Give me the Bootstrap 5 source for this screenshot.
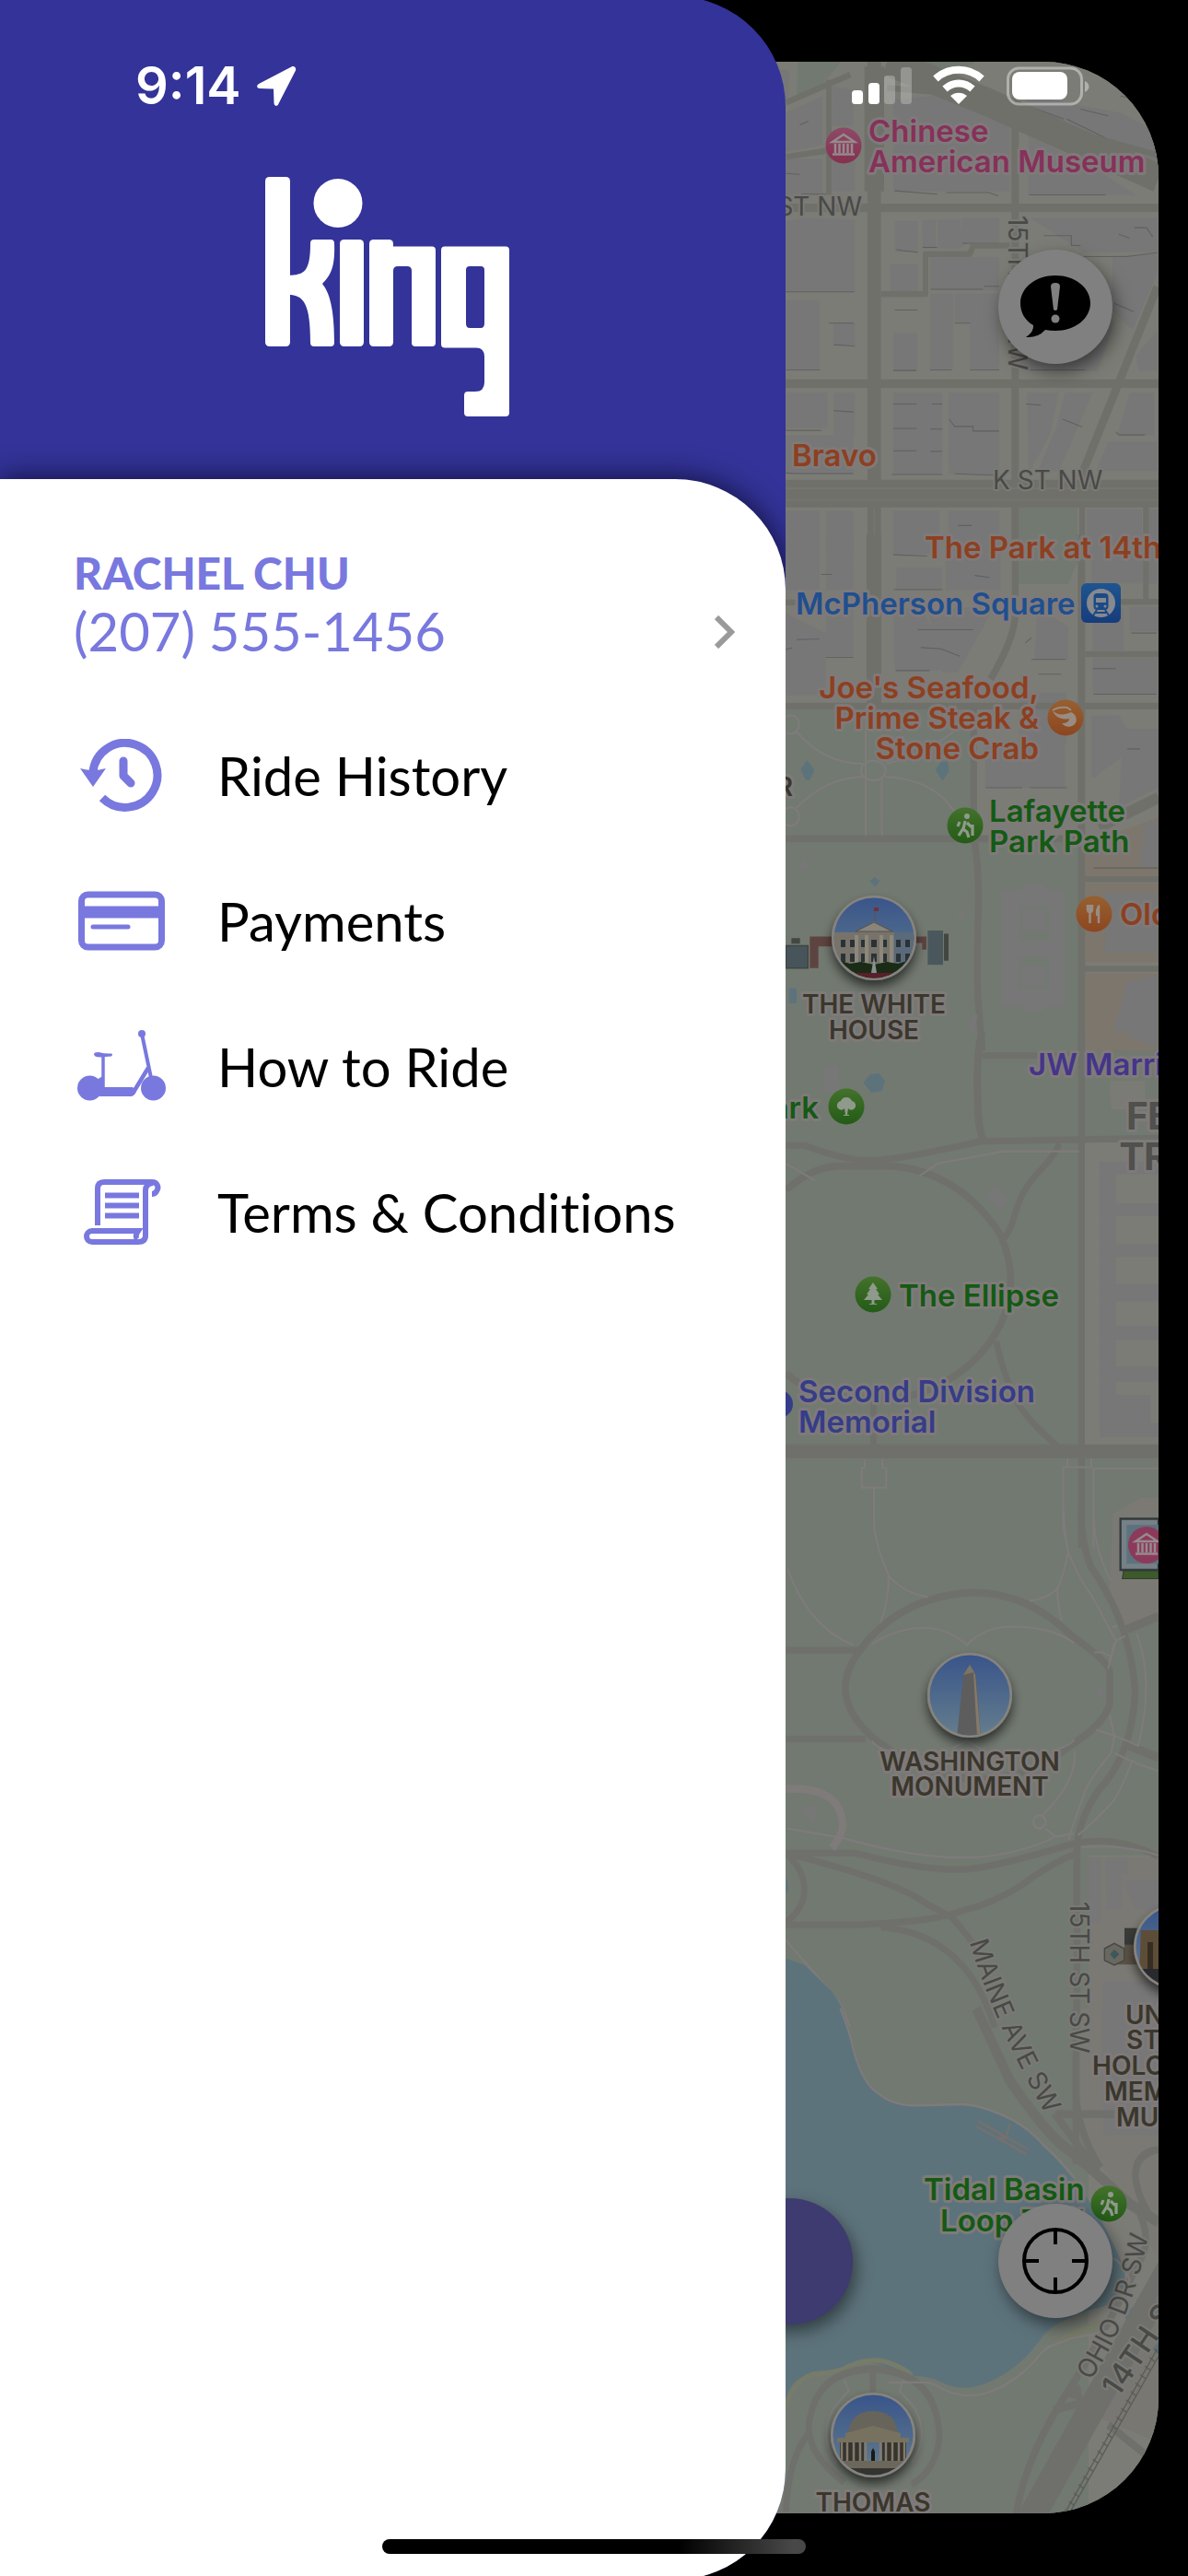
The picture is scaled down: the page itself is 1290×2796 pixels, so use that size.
<!DOCTYPE html>
<html lang="en">
<head>
<meta charset="utf-8">
<meta name="viewport" content="width=device-width, initial-scale=1">
<title>king – menu</title>
<link href="https://cdn.jsdelivr.net/npm/bootstrap@5.3.0/dist/css/bootstrap.min.css" rel="stylesheet">
<style>
  body { background: #000; font-family: Lato, "Open Sans", sans-serif; font-variant-ligatures: none; }
  .app-shell { min-height: 100vh; overflow: hidden; }
  .status-strip { z-index: 5; padding: 60px 107px 0 147px; color: #fff; }
  .clock { font: 600 56px/66px Inter, sans-serif; }
  .drawer { flex: 0 0 66.125%; z-index: 2; margin: -4px 0; background: #333399; border-radius: 0 120px 120px 0; overflow: hidden; }
  .brand { padding: 196px 12px 66px 0; }
  .sheet { background: #fff; border-top-right-radius: 120px; box-shadow: 0 0 32px rgba(0,0,20,.75); padding-top: 72px; }
  .profile { color: #7878df; padding: 0 55px 0 80px; height: 171px; }
  .profile-name { font-size: 48px; line-height: 60px; font-weight: 900; }
  .profile-phone { font-size: 58px; line-height: 66px; }
  .menu-link { color: #000; font-size: 58px; line-height: 66px; height: 158px; padding-left: 84px; gap: 56px; }
  .menu-link svg { color: #7878df; flex: none; }
  .map-pane { margin: 67px 32px 68px -113px; border-radius: 0 125px 125px 0; overflow: hidden; background: #7c7c76; min-width: 0; }
  .map-art { width: 100%; height: 100%; }
  .round-btn { width: 124px; height: 124px; right: 50px; background: #808080; border: 0; box-shadow: 4px 8px 18px rgba(0,0,0,.5); }
  .report-btn { top: 204px; }
  .locate-btn { bottom: 212px; }
  .ride-btn { width: 300px; height: 137px; right: 332px; bottom: 205px; background: #3d3b70; border: 0; box-shadow: 4px 8px 18px rgba(0,0,0,.45); }
  .home-bar { z-index: 6; bottom: 24px; left: 50%; width: 460px; height: 16px; transform: translateX(-50%); background: linear-gradient(90deg, #000 70%, #484848 97%); }
  .poi text { font: 600 33px Inter, sans-serif; paint-order: stroke; stroke: #7f7a7a; stroke-width: 6px; stroke-linejoin: round; }
  .poi .landmark { font-size: 28px; fill: #3a372c; }
  .poi .street { font-size: 28px; font-weight: 400; fill: #494946; stroke: #7a7a76; stroke-width: 4px; }
  .poi .avenue { font-size: 33px; font-weight: 500; }
  .poi .district { font: 700 42px Roboto, sans-serif; fill: #50504d; }
  .food { fill: #8d4020; } .park { fill: #145a14; } .metro { fill: #1f4f8f; }
  .museum { fill: #86315a; } .hotel { fill: #45358a; } .memorial { fill: #353d88; }
  .road { fill: none; stroke: #70706b; stroke-linejoin: round; }
  .parkroad { fill: none; stroke: #6f706c; stroke-linejoin: round; }
  .trail { fill: none; stroke: #7f7b7c; stroke-width: 6; stroke-linejoin: round; }
  .bld { fill: #777778; } .edge { fill: none; stroke: #606060; stroke-width: 3; }
  .green { fill: #727970; } .water { fill: #5d737c; }
</style>
<script src="https://cdn.jsdelivr.net/npm/bootstrap@5.3.0/dist/js/bootstrap.bundle.min.js"></script>
</head>
<body>
<div class="app-shell d-flex position-relative">

  <div class="status-strip position-absolute top-0 start-0 w-100 d-flex justify-content-between align-items-center">
    <div class="d-flex align-items-center gap-3">
      <span class="clock">9:14</span>
      <svg width="44" height="44" viewBox="0 0 44 44" aria-hidden="true"><path d="M38.500 1.500 3 20c-3 2-2 5 1 5l15 .5.5 15c0 4 4 4.500 5 1L43 5.500c1-3-1.500-5.500-4.500-4z" fill="#fff"/></svg>
    </div>
    <svg width="258" height="44" viewBox="0 0 258 44" aria-label="Signal, Wi-Fi, battery">
      <g fill="#fff">
        <rect x="0" y="27" width="12" height="15" rx="3.500"/><rect x="18" y="19" width="12" height="23" rx="3.500"/>
        <rect x="35" y="11" width="12" height="31" rx="3.500" opacity=".25"/><rect x="53" y="2" width="12" height="40" rx="3.500" opacity=".25"/>
        <path d="M116 42l-9-9c5-4.500 13-4.500 18 0z"/>
      </g>
      <g fill="none" stroke="#fff" stroke-width="8"><path d="M91 14.500c14-13 36-13 50 0"/><path d="M101 25.500c9-8 21-8 30 0"/></g>
      <rect x="169.500" y="3" width="80" height="39" rx="12" fill="none" stroke="#fff" stroke-width="3" opacity=".4"/>
      <rect x="174" y="7" width="60" height="30" rx="8" fill="#fff"/>
      <path d="M253 17v12c6-3 6-9 0-12z" fill="#fff" opacity=".4"/>
    </svg>
  </div>

  <aside class="drawer d-flex flex-column position-relative">
    <header class="brand text-center">
      <svg width="266" height="262" viewBox="0 0 266 262" fill="#fff" role="img" aria-label="king">
        <rect width="27" height="184" rx="4.500"/>
        <path d="M25 107C42 106 49 104 49 72q0-4 4-4h18q4 0 4 4c1 24-3 34-13 44 10 12 13 35 13 64q0 4-4 4H53q-4 0-4-4C49 138 42 128 25 128z"/>
        <circle cx="79" cy="28.500" r="26.500"/>
        <rect x="81" y="68" width="26" height="116" rx="4.500"/>
        <rect x="113" y="68" width="26" height="116" rx="4.500"/>
        <path d="M137 75.500h44q4 0 4 4V180q0 4-4 4h-18q-4 0-4-4v-78q0-5-5-5h-10q-5 0-5 5h-2z"/>
        <path fill-rule="evenodd" d="M195 75.500h66q4 0 4 4V256q0 4-4 4h-41q-4 0-4-4v-19q0-4 4-4h8q10 0 10-10v-28q0-9.500-9-9.500h-34q-4 0-4-4v-102q0-4 4-4zM222 97q-4 0-4 4v58q0 5 4 5h12q4 0 4-5v-58q0-4-4-4z"/>
      </svg>
    </header>
    <div class="sheet flex-grow-1">
      <a href="#profile" class="profile d-flex align-items-start justify-content-between text-decoration-none">
        <span class="d-flex flex-column text-nowrap"><span class="profile-name">RACHEL CHU</span><span class="profile-phone">(207) 555-1456</span></span>
        <svg class="align-self-center mt-3" width="22" height="36" viewBox="0 0 22 36" fill="none" stroke="#9a9a9a" stroke-width="6" aria-hidden="true"><path d="M2 2l16 16L2 34"/></svg>
      </a>
      <nav class="d-flex flex-column">
        <a href="#history" class="menu-link d-flex align-items-center text-decoration-none">
          <svg width="96" height="80" viewBox="84 802 96 80" fill="none" stroke="currentColor" stroke-width="9" aria-hidden="true">
            <path d="M101 838A35 35 0 1 1 111 866"/><path d="M134 826v16l8 8" stroke-linecap="round" stroke-linejoin="round"/><path d="M87 834q14 4 28 0l-14 20z" fill="currentColor" stroke="none"/>
          </svg><span>Ride History</span></a>
        <a href="#payments" class="menu-link d-flex align-items-center text-decoration-none">
          <svg width="96" height="80" viewBox="84 960 96 80" fill="none" stroke="currentColor" aria-hidden="true">
            <rect x="88.500" y="971" width="87" height="57" rx="7" stroke-width="7"/><path d="M88 990h88" stroke-width="13"/><path d="M101 1006h38" stroke-width="5" stroke-linecap="round"/>
          </svg><span>Payments</span></a>
        <a href="#how-to" class="menu-link d-flex align-items-center text-decoration-none">
          <svg width="96" height="80" viewBox="84 1118 96 80" fill="none" stroke="currentColor" aria-hidden="true">
            <g fill="currentColor" stroke="none"><circle cx="97.500" cy="1181" r="13.500"/><circle cx="166.500" cy="1181" r="13.500"/><circle cx="154" cy="1122" r="4"/><path d="M102 1144q0-2 5-2 7 2 14 1.500 2 1 0 3l-12 1q-7 0-7-3.500zM105 1172l8-5v13h31l4 4q-2 6-6 6h-34z"/></g>
            <path d="M112 1147v35" stroke-width="3.500"/><path d="M154 1122l10 48" stroke-width="4"/><path d="M144 1187l17-28" stroke-width="4.500"/>
          </svg><span>How to Ride</span></a>
        <a href="#terms" class="menu-link d-flex align-items-center text-decoration-none">
          <svg width="96" height="80" viewBox="84 1276 96 80" fill="none" stroke="currentColor" stroke-width="6" aria-hidden="true">
            <path d="M106 1330v-40q0-7 7-7h52c6 0 8 6 5 10q-2 3-5 3"/><path d="M166 1284q-8 1-8 8v49q0 7-8 7H100c-8 0-8-12 0-12h50q-4 6-1 9"/><path d="M114 1297.500h37M114 1308.500h37M114 1319.500h37"/>
          </svg><span>Terms &amp; Conditions</span></a>
      </nav>
    </div>
  </aside>

  <main class="map-pane flex-grow-1 position-relative">
    <svg class="map-art d-block" viewBox="740 67 518 2661" preserveAspectRatio="xMaxYMid slice" role="img" aria-label="Map of Washington, DC">
      <defs>
        <linearGradient id="sky" x1="0" y1="0" x2="0" y2="1"><stop offset="0" stop-color="#39558a"/><stop offset="1" stop-color="#647d8d"/></linearGradient>
        <linearGradient id="gGreen" x1="0" y1="0" x2="0" y2="1"><stop offset="0" stop-color="#43722b"/><stop offset="1" stop-color="#235b17"/></linearGradient>
        <linearGradient id="gOrange" x1="0" y1="0" x2="0" y2="1"><stop offset="0" stop-color="#97602f"/><stop offset="1" stop-color="#8d4620"/></linearGradient>
        <linearGradient id="gBlue" x1="0" y1="0" x2="0" y2="1"><stop offset="0" stop-color="#1f5590"/><stop offset="1" stop-color="#163c7c"/></linearGradient>
        <linearGradient id="gPink" x1="0" y1="0" x2="0" y2="1"><stop offset="0" stop-color="#8c4a66"/><stop offset="1" stop-color="#86304f"/></linearGradient>
        <filter id="drop" x="-40%" y="-40%" width="180%" height="180%"><feDropShadow dx="0" dy="7" stdDeviation="6" flood-opacity=".6"/></filter>
        <clipPath id="disc"><circle r="43.500"/></clipPath>
        <g id="temple"><path d="M-12-4L0-12 12-4z" fill="none" stroke="#968a8d" stroke-width="2.500"/><path d="M-9-2v10M-4.500-2v10M0-2v10M4.500-2v10M9-2v10" stroke="#968a8d" stroke-width="2.500"/><path d="M-12 9.500h24" stroke="#968a8d" stroke-width="2.500"/></g>
        <g id="hiker"><circle r="19.500" fill="url(#gGreen)"/><circle cx="2" cy="-10" r="3" fill="#8f9a8c"/><path d="M0-5l-2 9 4 3 2 6M-2 3l-5 8M2-3l4 4h3M8-1v12M-6-4l-2 5" fill="none" stroke="#8f9a8c" stroke-width="3.200"/></g>
      </defs>

      <rect x="740" y="67" width="518" height="2661" fill="#7c7c76"/>
      <path class="green" d="M740 770h316v142h119v228h83v874h-76v714H740z"/>
      <path class="green" d="M1104 544h66v66l-10 24h-56z" fill="#707a6e"/>

      <!-- downtown blocks, north -->
      <g transform="translate(840 40) scale(.33333 .35714)">
        <path class="green" d="M80 75h140l-80 90-65 10zM370 75h290l-60 30-220 10z"/>
        <path class="bld" d="M0 100h50v90l-50 20zM190 150l70 10v110h-70zM40 230l120-50v150l-120 20zM190 300h75v170h-75zM40 370h120v110H40zM390 190l130-10 250 90v200H390zM830 300l200 90 150 90H830zM800 240l300 110 150 30v-90l-120-60-300-50z"/>
        <path class="bld" d="M40 560l60-10 165 5v220H40zM395 560h75v95h-75zM485 555h45v90h-45zM535 555h75v90h-75zM615 550h120v75h-100l-30 20zM510 670h225v100H510zM380 690h90v90h-90zM835 550h415v105H1010zM1105 665l145-5v60l-80 170-70-60zM40 800h110v210H40zM195 870h70v70h-70zM390 900h78v115h-78zM510 780h75v230h-75zM590 780h145v90h-95v140h95V870h-145zM835 960l280-100-60 155H835zM1180 970l70-80v125h-60z"/>
        <path class="bld" d="M40 1080h135v110H40zM195 1080h70v130h-70zM40 1210h220v120H40zM390 1080h160v250H390zM570 1080h165v250H570zM825 1080h105l-30 130-70 120zM950 1080h90l-110 240h-70l60-130zM1160 1080h80v130h-120zM1090 1230h160v90h-200zM40 1440h110v130H40zM170 1440h90v130h-90zM390 1440h150v130H390zM570 1440h165v130H570zM1020 1435h180v130h-180zM1220 1435h35v130h-35z"/>
        <path class="edge" d="M40 415l45 3M90 478h80M395 468l140 10M562 473h138l32 10M832 480h250M400 647l70 8M485 640h48M615 627h120M512 767h170M685 758h50M880 604h90v30h30M1010 668h140l100-12M1125 600l35 12M1175 580h40l20 28M40 775h222M395 830h75M590 870h50M40 1012h112M390 1014h75M510 1012h70M640 1012h95M835 1012h180M180 870h82M195 935l70 5M390 1116h76M515 1116h35M390 1190h76M510 1192h40M40 1196h115M195 1136l65 4M572 1162l18 22h60v14h85M390 1258h75M510 1260h40M385 1330h165M590 1328l145 5M40 1325l30 2h190M822 1116l48 3M942 1162l64 24M1115 1200l10 10h85M1110 810l64 26M85 268l28-12M830 210l115 40M955 250l180 82M1000 220l90 20M1130 180l60 12M60 1526h85M600 1485h45"/>
        <g class="road">
          <path d="M328 70v1500" stroke-width="44"/><path d="M328 90v380" stroke-width="64" /><path d="M0 520h1254" stroke-width="26"/><path d="M0 1054h1254" stroke-width="26"/><path d="M0 1388h1254" stroke-width="84"/>
          <path d="M787 240v1310" stroke-width="24"/><path d="M370 75L700 200 1254 430" stroke-width="86"/><path d="M180 130v350M40 365l140-20M40 200l210-85M370 155l250 20" stroke-width="18"/><path d="M1250 760L1000 1340" stroke-width="26"/><path d="M350 782h145V660h145l10-26h120" stroke-width="18"/><path d="M1005 1400v170M1213 1400v170M830 250l424 110" stroke-width="18"/>
        </g>
        <path d="M328 1430v140M40 1372h1214M40 1408h1214" stroke="#777772" stroke-width="4" fill="none"/>
      </g>

      <!-- McPherson Square to the White House -->
      <g transform="translate(840 580) scale(.33333 .35714)">
        <path class="bld" d="M40 0h110v170H40zM170 0h90v170h-90zM390 0h110l0 60h-110zM400 100h150v70H400zM560 60h180v110H560zM1035 0h215v150h-215zM40 240l130 60v190H40zM170 225h90v145h-90zM390 225h95l60 120v70H395zM500 225l220-5-120 200h-50zM860 220l100 60v100h-110zM1040 225h100v130h-100zM1160 220h94v75h-94zM1040 375h210v110h-210zM1035 550h90l60 90-140 100h-10zM800 480h155v160H800zM690 640h260v130H690zM1140 590h114v180l-130 60z"/>
        <path d="M1015 940l239-80v180h-239zM1015 1060h239v240h-239zM1015 1335h239v233h-239z" fill="#7d766c"/>
        <path class="bld" d="M1080 1090h170v180h-170zM1150 1360l100-20v220l-140-50zM1210 880l44-10v140h-60z"/>
        <path class="bld" d="M740 1080h70v-20h70v20h70v355h-70v15h-60v-15h-80z"/><path class="green" d="M800 1130h95v105h-95zM797 1285h98v97h-98z"/><path class="bld" d="M810 1140h75v65h-75zM808 1310h78v60h-78z"/>
        <path class="edge" d="M155 122h35M390 62l110 4M655 125l48 6M392 168h158M40 350l20-5M75 320l75-2M170 374h90M470 290h180M480 344l66 4 60 22M398 414h110M840 380h112M862 425h75M1040 408h75M1042 486h205M1165 300h82M690 770h120M835 770h120M1152 652h42M1042 1014h210M820 330l20-16"/>
        <g class="road"><path d="M327 0v515" stroke-width="48"/><path d="M1003 0v1568" stroke-width="24"/><path d="M787 0v250q-5 70-80 190" stroke-width="22"/><path d="M0 522h1254" stroke-width="20"/><path d="M1015 205h239M1015 364h239M1213 0v200" stroke-width="18"/><path d="M1003 1048h251M1003 1320h251" stroke-width="18"/><path d="M1254 800L1060 890" stroke-width="34"/><path d="M40 207h50" stroke-width="18"/></g>
        <g class="parkroad"><path d="M0 925h1003" stroke-width="22"/><path d="M652 525v400q20 90 14 240-5 150 0 250l14 155" stroke-width="22"/></g>
        <g class="trail"><path d="M300 530v385M353 740v175M75 600q90 98 220 98M75 830q100-93 220-93M365 737q120 5 190 66l35 40M365 698q130-30 220-98"/><ellipse cx="325" cy="718" rx="40" ry="30"/><circle cx="55" cy="578" r="28"/><circle cx="55" cy="858" r="28"/></g>
        <g class="water"><path d="M88 716l20-30 26 30-15 30h-14zM527 716l18-26h24l2 30-20 28zM313 1055l15-14 18 12-14 18zM50 1380h25v45H50z"/></g>
        <path class="bld" d="M85 1000l14-12 14 12-5 14H88zM600 1150l20-2 5 18-28 2zM645 1460h20l-12 55h-18z"/>
        <path d="M118 1222h80v30h-52v66h-28zM460 1222h38v40h-14v-20h-26z" fill="#5e4440"/><path d="M40 1250h72v68H40z" fill="#47545a" stroke="#3d4444" stroke-width="4"/><path d="M502 1204h50v104h-50z" fill="#4a575d"/><path d="M555 1214h15v82h-15zM58 1227h28v17H58z" fill="#444641"/>
      </g>

      <!-- the Ellipse -->
      <g transform="translate(840 1120) scale(.33333 .35714)">
        <path d="M1015 0h145l-15 58h-130z" fill="#7d766c"/><path d="M1095 150h115v85h-110z" fill="#7b7b75"/>
        <path d="M1010 325h244v930h-244z" fill="#7c7c76"/>
        <path class="bld" d="M1062 395h192v38h-138v88h138v40h-138v84h138v40h-138v80h138v54h-138v74h138v44h-138v80h138v46h-138v40h52v84h-52v-84h52 60v84h26v44h-192z"/>
        <g class="parkroad"><path d="M680 0q-22 70-15 210 0 80 20 125" stroke-width="24"/><path d="M680 72h323" stroke-width="20"/><path d="M40 345h60q130 45 200 45 80 5 370-57l584-10" stroke-width="20"/><path d="M930 340q-10 30-60 80-65 60-85 140-20 60-40 70" stroke-width="20"/><path d="M40 480q90-70 170-72h180q220 20 350 210 65 140 0 270-90 165-300 220-280 30-400-70" stroke-width="22"/><path d="M725 940q20 90 60 170 20 50 140 150M325 1110v145" stroke-width="20"/></g>
        <g class="parkroad"><path d="M1003 0v1568" stroke-width="22"/><path d="M0 1275h1254" stroke-width="42"/></g>
        <g class="trail"><path d="M40 400l95 52M475 438l60-38 215-37h245M297 1300v25h-10v60h80v-60h-13v-25M327 1388v110q2 30 15 70M957 1298v25h-14v180l14 65M1035 1298v25h-85M1042 1568V1327h212"/></g>
        <path class="bld" d="M165 105h45l6 78h-55zM692 495l36-30 40 44-30 30z"/><path class="water" d="M293 155l20-25 30-5 20 25-10 30-35 5z"/>
      </g>

      <!-- Washington Monument grounds -->
      <g transform="translate(840 1640) scale(.33333 .35714)">
        <path d="M1105 10l90-50h60v360l-105 35q-50-60-55-120zM1025 1050h229v520h-229z" fill="#7b7973"/>
        <path class="bld" d="M1025 1055h42v195h-42zM1080 1055h75v50h-20v105h-50zM1140 1120h114v90h-80zM1075 1430h179v140h-179z"/>
        <g class="parkroad" stroke-width="20"><path d="M40 423h240M40 693h260" /><path d="M1003 0q-5 80 30 170 130 170 145 380-10 190-120 300-60 80-70 170v550" stroke-width="22"/><path d="M300 400q130-140 340-152 180-5 330 130 120 80 125 110v100q-20 60-120 120-300 220-640-10-180-140-40-290z" stroke-width="22"/><path d="M40 1040h230q200 50 330 50 100 0 380-80 140-25 274 40M60 1045q340 80 440 150l80 40q50 50 100 120M40 1258h220q270-10 350-42 100-20 200-80 100-70 180-95M350 1265q280 20 370 305M40 1040q60 50 60 110 0 60-60 100"/><path d="M1150 710l104 40M1150 360l104-40" stroke-width="26"/></g>
        <path d="M40 845q180-10 185 110 0 30-35 70" fill="none" stroke="#7f7b7b" stroke-width="24"/>
        <g class="trail"><path d="M327 0q-5 90 48 195 0 80-27 145M378 200q50 50 125 62M45 175q70 180 215 232M945 0q0 60 15 125-15 70-35 110-30 30-90 38M925 235q0 60 15 100M1042 0q0 110 55 210M960 125q40 90 75 130l80 140-15 50q-25-20-55-15M1100 355l20-7M1115 395l30-15M1110 400l-20 80M1182 372q60 140 5 345M320 405q100-60 200-48 60 10 110 50 50-50 130-55 140-5 220 50M585 720l45-22 50 27M320 700q20 22 60 30M980 695q-20 20-60 30M980 730q10 90-105 195M885 965l35 25 60-10M1095 620l15 65-10 50q-80 90-90 130-40 100-48 135M1050 665q60 15 140 50M1110 735q70 35 144 55M1170 755q-40 100-70 135-90 85-110 95M45 965q90 15 185 30 300 80 500 50 120-20 185-55M1003 1022q140-10 251 25M40 1305l150 160q30 30 60 105"/><circle cx="866" cy="945" r="20"/></g>
        <path class="bld" d="M97 905l28-15 22 35-25 25zM1052 533h22v34h-22z"/>
        <path class="water" d="M40 1360l60 20 90 80q35 40 52 110H40zM40 1115q12 20 5 45h-5z"/>
        <path d="M1130 24h124v155h-124z" fill="#768087" stroke="#333a3d" stroke-width="7"/><path d="M1150 42h104v118h-104z" fill="#5c737e"/><path d="M1140 182h114v24h-118z" fill="#3d5a2a" stroke="#333a33" stroke-width="3"/>
        <path d="M1143 1268h111v110h-140l-10-15 39-5z" fill="#5a5245"/><path d="M1078 1330l32-16 32 16v36l-32 14-32-14z" fill="#686860" stroke="#484842" stroke-width="4"/><path d="M1096 1347l14-14 16 14-16 16z" fill="#3c585c"/><path d="M1143 1268h38v50h-38z" fill="#383b37"/>
      </g>

      <!-- Tidal Basin -->
      <g transform="translate(840 2180) scale(.33333 .39293)">
        <path d="M1000 0h254v700l-100-170-100-110-55-80z" fill="#7b7973"/><path class="bld" d="M1070 0h184v350h-178V270h-6z"/>
        <path d="M1254 850v350L1060 1130z" fill="#787771"/>
        <path class="water" d="M0 0h220q25 60 40 110 30 90 80 125 40 30 110 33l160-3q50 0 120 25 90 30 150 90 150 130 220 260 60 90 40 140-30 40-100 50-110 30-160 70-60 80-150 120-100 50-190 10-40-17-100-14-30 0-40-15-70-30-130-20-60 10-100 30-120-10-130 80H0z"/>
        <path class="water" d="M1140 850l60-50 15 10-50 60zM1235 940l20-20v40z"/>
        <path d="M40 1100q20-70 90-90 90-5 110-20 80-30 140-10 60 20 70 35" fill="none" stroke="#767c69" stroke-width="14"/><path d="M905 930q60-50 190-75l-20 35-160 40z" fill="#767b69"/>
        <g class="parkroad" stroke-width="22"><path d="M660 0q60 110 110 200 130 160 190 190 100 70 200 150l94 50" stroke-width="30"/><path d="M985 0v430M920 292h190M985 240q10 110 80 200M915 290l140 160M1254 390q-80 10-75 80 10 60 60 120M1180 540q60 100 10 160-100 180-210 330-160 200-190 370M910 1110l160-35M985 1040q10 60 50 90M960 1060q40 20 30-10M1090 1150l164 110"/><path d="M1290 720L830 1420" stroke-width="84"/><path d="M323 1060v-70M40 1390q10-160 80-220M230 1310q-120-80-115-160 20-150 210-155 210 10 215 190-10 90-90 130" stroke-width="20"/></g>
        <g class="trail"><path d="M217 0q30 60 45 120 30 90 80 115 40 30 110 33l160-3q50 0 120 25 90 30 150 90 60 45 100 90M1105 690q30 10 55 60l-25 50 20 40-60 50-120 20-80 25q-25 15-40 35-60 55-120 78-90 40-180 5-40-20-60-20h-120M230 1025l15 30-50 50q-50 80 10 150M425 1025l-15 30 50 50q50 80-10 150"/><path d="M660 325l165 78M668 312l162 78M735 355l20 5 15-40" stroke="#77706c"/></g>
        <path d="M1250 940L945 1400M1258 955L960 1400" fill="none" stroke="#5d5d58" stroke-width="4"/><path d="M1250 945L950 1400" fill="none" stroke="#5d5d58" stroke-width="20" stroke-dasharray="4 24"/>
      </g>

      <!-- street names and points of interest -->
      <g class="poi">
        <text class="street" x="936" y="234" text-anchor="end">I ST NW</text>
        <text class="street" x="1078" y="531">K ST NW</text>
        <text class="street" transform="translate(1095 234) rotate(90)">15TH ST NW</text>
        <text class="street" transform="translate(1162 2064) rotate(90)">15TH ST SW</text>
        <path id="maine" d="M1053 2108Q1078 2195 1144 2310" fill="none"/><path id="ohio" d="M1184 2584Q1232 2515 1250 2410" fill="none"/>
        <text class="street"><textPath href="#maine">MAINE AVE SW</textPath></text>
        <text class="street"><textPath href="#ohio">OHIO DR SW</textPath></text>
        <text class="street avenue" transform="translate(1214 2603) rotate(-56)">14TH ST</text>
        <text class="museum" x="943" y="154">Chinese</text><text class="museum" x="943" y="187">American Museum</text>
        <text class="food" x="860" y="506">Bravo</text>
        <text class="food" x="1004" y="606">The Park at 14th</text>
        <text class="metro" x="864" y="667">McPherson Square</text>
        <g class="food" text-anchor="end"><text x="1128" y="758">Joe's Seafood,</text><text x="1128" y="791">Prime Steak &amp;</text><text x="1128" y="824">Stone Crab</text></g>
        <text class="park" x="1074" y="892">Lafayette</text><text class="park" x="1074" y="925">Park Path</text>
        <text class="food" x="1216" y="1004">Old Ebbitt</text>
        <text class="landmark" x="861" y="864" text-anchor="end">R</text>
        <g text-anchor="middle"><text class="landmark" x="949" y="1100">THE WHITE</text><text class="landmark" x="949" y="1128">HOUSE</text>
        <text class="landmark" x="1053" y="1922">WASHINGTON</text><text class="landmark" x="1053" y="1949">MONUMENT</text>
        <text class="landmark" x="948" y="2726">THOMAS</text></g>
        <text class="park" x="889" y="1214" text-anchor="end">Park</text>
        <text class="hotel" x="1117" y="1167">JW Marriott</text>
        <text class="district" x="1223" y="1226">FEDERAL</text><text class="district" x="1216" y="1270">TRIANGLE</text>
        <text class="park" x="976" y="1418">The Ellipse</text>
        <text class="memorial" x="867" y="1522">Second Division</text><text class="memorial" x="867" y="1555">Memorial</text>
        <text class="landmark" x="1222" y="2197">UNITED</text><text class="landmark" x="1223" y="2224">STATES</text><text class="landmark" x="1186" y="2252">HOLOCAUST</text><text class="landmark" x="1199" y="2280">MEMORIAL</text><text class="landmark" x="1212" y="2308">MUSEUM</text>
        <text class="park" x="1003" y="2388">Tidal Basin</text><text class="park" x="1021" y="2422">Loop Trail</text>
      </g>

      <g transform="translate(916 158)"><circle r="19.500" fill="url(#gPink)"/><use href="#temple"/></g>
      <g transform="translate(1245 1677)"><circle r="20" fill="#8c3a5b"/><use href="#temple"/></g>
      <g transform="translate(1174 633)"><rect width="43" height="43" rx="6" fill="url(#gBlue)"/><circle cx="21.500" cy="21.500" r="15.500" fill="#86898f"/><rect x="13.500" y="11" width="16" height="18" rx="4" fill="#1b4a86"/><path d="M16 16h11v5H16z" fill="#86898f"/><path d="M17 29l-4 6M26 29l4 6M15 32h13" stroke="#1b4a86" stroke-width="2"/><circle cx="17" cy="25" r="1.500" fill="#86898f"/><circle cx="26" cy="25" r="1.500" fill="#86898f"/></g>
      <g transform="translate(1157 779)"><circle r="19.500" fill="url(#gOrange)"/><path d="M-14-8c4 5 12 6 20 2 6 2 8 10 3 14-5 3-10 2-13-2 5 0 8-2 8-5-8 2-16-2-18-9z" fill="#988c83"/><path d="M-14-8q6-4 16-3l4 3" fill="none" stroke="#988c83" stroke-width="2"/></g>
      <g transform="translate(1188 992)"><circle r="19.500" fill="url(#gOrange)"/><path d="M-7-10v5q0 3 2.500 3t2.500-3v-5M-4.500-10v20M5-9v19" stroke="#988c83" stroke-width="2.500" fill="none"/><path d="M5-10q-4 4-3 12h4v-12z" fill="#988c83"/></g>
      <use href="#hiker" x="1048" y="896"/><use href="#hiker" x="1204" y="2392"/>
      <g transform="translate(919 1201)"><circle r="19.500" fill="url(#gGreen)"/><path d="M-8 3a5 5 0 0 1 2-9 6.500 6.500 0 0 1 12 0 5 5 0 0 1 2 9q-4 2-6-1l-1 7h2v1h-6v-1h2l-1-7q-2 3-6 1z" fill="#8f9a8c"/></g>
      <g transform="translate(948 1405)"><circle r="19.500" fill="url(#gGreen)"/><path d="M0-13l5 7H3l4 6H5l5 6H1.500v4H4v1h-8v-1h2.500V6H-10l5-6h-2l4-6h-2z" fill="#8f9a8c"/></g>
      <circle cx="846" cy="1524" r="15" fill="#353d88"/>

      <g transform="translate(949 1018)"><circle r="46" fill="#87837f" filter="url(#drop)"/><g clip-path="url(#disc)"><rect x="-44" y="-44" width="88" height="88" fill="url(#sky)"/><path d="M-44-6h24l20-12 20 12h24v36h-88z" fill="#77736a"/><path d="M22-6h22v36H22z" fill="#5a6a7b"/><path d="M-20-7L0-17 20-7z" fill="#8a857c" stroke="#545049" stroke-width="1"/><path d="M-19-3v32M-8-3v32M8-3v32M19-3v32" stroke="#8d887c" stroke-width="4"/><path d="M-36 2h5v8h-5zM-26 2h5v8h-5zM-14 2h4v8h-4zM-3 2h6v8h-6zM10 2h4v8h-4zM24 2h5v8h-5zM34 2h5v8h-5zM-36 17h5v9h-5zM-26 17h5v9h-5zM-14 17h4v9h-4zM-3 17h6v9h-6zM10 17h4v9h-4zM24 17h5v9h-5zM34 17h5v9h-5z" fill="#2b3236"/><path d="M-44 28l8-3 10 3 12-2 14 3 14-3 12 2 10-3 8 3v16h-88z" fill="#1a2b16"/><path d="M-30 38h60v8h-60z" fill="#591f2a"/><path d="M-3 38l3-18 3 18z" fill="#8a9091"/><path d="M1-32v14" stroke="#555"/><path d="M0-33h5v4H0z" fill="#70313b"/></g></g>
      <g transform="translate(1053 1840)"><circle r="46" fill="#87837f" filter="url(#drop)"/><g clip-path="url(#disc)"><rect x="-44" y="-44" width="88" height="88" fill="url(#sky)"/><path d="M-14 46l7-68 7-11 7 12 5 67z" fill="#5d5d5d"/><path d="M4-25l-4-8 6 11 6 68H8z" fill="#85796a"/><path d="M-7-22L0-33 5-25z" fill="#7d7564"/></g></g>
      <g transform="translate(948 2643)"><circle r="46" fill="#87837f" filter="url(#drop)"/><g clip-path="url(#disc)"><rect x="-44" y="-44" width="88" height="88" fill="url(#sky)"/><path d="M-27-4q4-22 27-22t27 22z" fill="#67645b"/><path d="M-30-2L0-10 30-2v6h-60zM-39 3h78v5h-78z" fill="#77725f"/><path d="M-36 8h26v20h-26zM10 8h26v20H10z" fill="#37332d"/><path d="M-34 8v20M-28 8v20M-21 8v20M-14 8v20M-8 8v20M8 8v20M14 8v20M21 8v20M28 8v20M34 8v20" stroke="#817b6c" stroke-width="2.500"/><path d="M-2 28v-10l2-4 2 4v10z" fill="#191919"/><path d="M-40 28h80v9h-80z" fill="#6c675b"/><path d="M-34 36h68v10h-68z" fill="#333330"/></g></g>
      <g transform="translate(1277 2113)"><circle r="46" fill="#87837f" filter="url(#drop)"/><g clip-path="url(#disc)"><rect x="-44" y="-44" width="88" height="88" fill="url(#sky)"/><path d="M-38-18h20v-5h62v50h-84z" fill="#5d4d38"/><path d="M-31-5h6v30h-6zM-19-5h6v30h-6z" fill="#352d22"/><path d="M-44 24h88v22h-88z" fill="#292a2e"/></g></g>
    </svg>

    <button type="button" class="round-btn report-btn rounded-circle position-absolute p-0" aria-label="Report a problem">
      <svg width="78" height="70" viewBox="0 0 78 70" aria-hidden="true"><path d="M39 1c21 0 38 13 38 30S60 61 39 61q-6 0-11-1-8 9-21 8 9-6 8-13C6 50 1 41 1 31 1 14 18 1 39 1z"/><path d="M34 13q0-4 5-4t5 4l-3 25q-2 2-4 0z" fill="#808080"/><circle cx="39" cy="48" r="4.500" fill="#808080"/></svg>
    </button>
    <button type="button" class="ride-btn rounded-pill position-absolute" aria-label="Start ride"></button>
    <button type="button" class="round-btn locate-btn rounded-circle position-absolute p-0" aria-label="Find my location">
      <svg width="74" height="74" viewBox="0 0 74 74" fill="none" stroke="#000" stroke-width="4" aria-hidden="true"><circle cx="37" cy="37" r="34"/><path d="M37 2v17M37 55v17M2 37h17M55 37h17"/></svg>
    </button>
  </main>

  <div class="home-bar rounded-pill position-absolute"></div>
</div>
</body>
</html>
